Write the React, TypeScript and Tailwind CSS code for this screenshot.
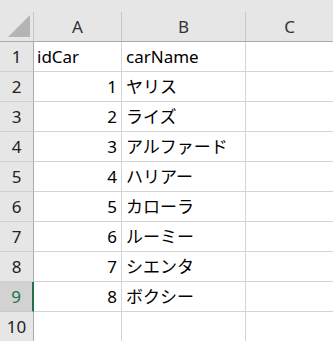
import React from 'react'

const rows: [string, string][] = [
  ['idCar', 'carName'],
  ['1', 'ヤリス'],
  ['2', 'ライズ'],
  ['3', 'アルファード'],
  ['4', 'ハリアー'],
  ['5', 'カローラ'],
  ['6', 'ルーミー'],
  ['7', 'シエンタ'],
  ['8', 'ボクシー'],
  ['', ''],
]

const SELECTED = 9

export default function App() {
  return (
    <div
      className="w-[333px] h-[341px] overflow-hidden bg-white text-[17px] text-black"
      style={{ fontFamily: '"Noto Sans", "Noto Sans CJK JP", sans-serif' }}
    >
      {/* 上の余白 */}
      <div className="h-[12px] bg-[#e6e6e6]" />

      {/* 列ヘッダー */}
      <div className="grid grid-cols-[34px_88px_124px_1fr] h-[30px] bg-[#e6e6e6] border-b border-[#ababab] text-[#333]">
        <div className="relative border-r border-[#c8c8c8]">
          <svg width="22" height="22" viewBox="0 0 22 22" className="absolute left-[8px] top-[3px]">
            <polygon points="22,0 22,22 0,22" fill="#b4b4b4" />
          </svg>
        </div>
        {['A', 'B', 'C'].map((c, i) => (
          <div
            key={c}
            className={`flex items-center justify-center leading-none ${i < 2 ? 'border-r border-[#c8c8c8]' : ''}`}
          >
            {c}
          </div>
        ))}
      </div>

      {/* 行 */}
      {rows.map(([a, b], i) => {
        const n = i + 1
        const sel = n === SELECTED
        const isNum = a !== '' && !isNaN(Number(a))
        return (
          <div key={n} className="grid grid-cols-[34px_88px_124px_1fr] h-[30px]">
            <div
              className={[
                'flex items-center justify-center border-b',
                sel
                  ? 'bg-[#d2d2d2] text-[#217346] border-r-2 border-r-[#217346] border-b-[#c8c8c8]'
                  : 'bg-[#e6e6e6] text-[#222] border-r border-r-[#ababab] border-b-[#d0d0d0]',
              ].join(' ')}
            >
              {n}
            </div>
            <div
              className={`flex items-center border-r border-b border-[#d4d4d4] ${
                isNum ? 'justify-end pr-[4px]' : 'pl-[3px]'
              }`}
            >
              {a}
            </div>
            <div className="flex items-center pl-[4px] border-r border-b border-[#d4d4d4] whitespace-nowrap">
              {b}
            </div>
            <div className="border-b border-[#d4d4d4]" />
          </div>
        )
      })}
    </div>
  )
}
